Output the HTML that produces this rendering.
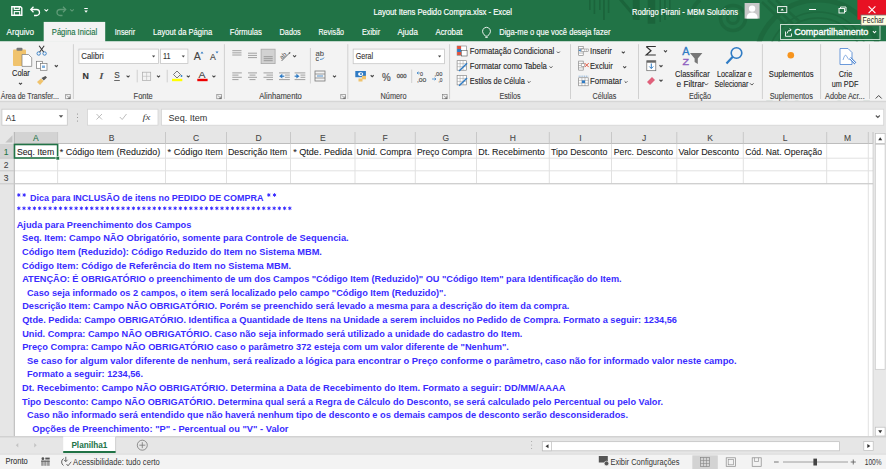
<!DOCTYPE html>
<html><head><meta charset="utf-8"><style>
html,body{margin:0;padding:0;background:#fff;overflow:hidden;}
svg{display:block;font-family:"Liberation Sans",sans-serif;}
</style></head><body>
<svg width="886" height="469" viewBox="0 0 886 469">
<rect x="0" y="0" width="886" height="41.5" fill="#217346" />
<g fill="#1a6139" opacity="0.8"><rect x="589" y="0" width="1.6" height="10"/><rect x="593.6" y="0" width="1.6" height="14"/><rect x="599" y="0" width="1.6" height="10"/><rect x="603" y="0" width="1.8" height="20"/><rect x="607.8" y="0" width="1.6" height="13"/><path d="M619 0 L623 0 L640 20 L636 20 Z"/><rect x="632.8" y="0" width="6.8" height="19.6"/><rect x="647.7" y="0" width="7.5" height="23.7"/><rect x="659.5" y="0" width="1.5" height="22"/><rect x="664.2" y="0" width="1.5" height="20"/><rect x="669" y="0" width="1.5" height="17"/></g>
<g fill="none" stroke="#1a6139" opacity="0.55"><circle cx="733" cy="18" r="12.5" stroke-width="3.5"/><circle cx="733" cy="18" r="5.5" stroke-width="3"/><circle cx="818" cy="62" r="62" stroke-width="5"/><circle cx="818" cy="62" r="50" stroke-width="1.5"/><circle cx="818" cy="62" r="44" stroke-width="1.5"/><path d="M700 0 A 20 20 0 0 0 692 18" stroke-width="4"/><path d="M762 2 L785 24 M768 0 L793 24 M776 0 L800 22" stroke-width="2.5"/></g>
<path d="M11.8 6.8 H20.5 L21.8 8.1 V15.3 H11.8 Z" fill="none" stroke="#fff" stroke-width="1.4" />
<rect x="14.3" y="6.8" width="5" height="2.6" fill="none" stroke="#fff" stroke-width="1.1" />
<rect x="14.3" y="11.6" width="5.4" height="3.7" fill="none" stroke="#fff" stroke-width="1.1" />
<path d="M31.5 9.5 H36.5 A3 3 0 0 1 36.5 15.5 H34" fill="none" stroke="#fff" stroke-width="1.3" />
<path d="M33.5 6.8 L30.8 9.5 L33.5 12.2" fill="none" stroke="#fff" stroke-width="1.3" />
<path d="M44.5 9.299999999999999 L46.3 11.1 L48.099999999999994 9.299999999999999" fill="none" stroke="#fff" stroke-width="1.08" />
<path d="M65 9.5 H60 A3 3 0 0 0 60 15.5 H62.5" fill="none" stroke="#5f9b77" stroke-width="1.3" />
<path d="M63 6.8 L65.7 9.5 L63 12.2" fill="none" stroke="#5f9b77" stroke-width="1.3" />
<path d="M70.2 9.299999999999999 L72 11.1 L73.8 9.299999999999999" fill="none" stroke="#5f9b77" stroke-width="1.08" />
<line x1="84.3" y1="8.5" x2="87.8" y2="8.5" stroke="#fff" stroke-width="1" />
<path d="M84.3 10.5 L87.8 10.5 L86.05 12.8 Z" fill="#fff" />
<g stroke="#fff" stroke-width="0.18">
<text x="373.4" y="14.7" font-size="9" fill="#fff" textLength="138.6" lengthAdjust="spacingAndGlyphs">Layout Itens Pedido Compra.xlsx  -  Excel</text>
<text x="632" y="14.7" font-size="9" fill="#fff" textLength="106" lengthAdjust="spacingAndGlyphs">Rodrigo Pirani - MBM Solutions</text>
</g>
<rect x="744.6" y="3" width="15" height="15.6" fill="#c9c9c9" />
<circle cx="752.1" cy="8.6" r="3.2" fill="#fff"/>
<path d="M746.5 18.6 Q746.5 12.5 752.1 12.5 Q757.7 12.5 757.7 18.6 Z" fill="#fff" />
<rect x="777.6" y="6.6" width="9.2" height="6" fill="none" stroke="#fff" stroke-width="0.9" />
<path d="M780.5 10.5 L782.2 8.5 L783.9 10.5 Z" fill="#fff" />
<line x1="809" y1="9.5" x2="816" y2="9.5" stroke="#fff" stroke-width="1" />
<rect x="839" y="8.5" width="5.5" height="4.5" fill="none" stroke="#fff" stroke-width="0.9" />
<path d="M840.5 8.5 V7 H846 V11.5 H844.5" fill="none" stroke="#fff" stroke-width="0.9" />
<rect x="857.4" y="0" width="28.6" height="19.7" fill="#e81123" />
<path d="M868.6 6.4 L875.4 13.2 M875.4 6.4 L868.6 13.2" fill="none" stroke="#fff" stroke-width="1.1" />
<g stroke="#fff" stroke-width="0.15">
<text x="6.5" y="35" font-size="9" fill="#fff" textLength="27.6" lengthAdjust="spacingAndGlyphs">Arquivo</text>
</g>
<rect x="43.7" y="21.9" width="61.5" height="20" fill="#f3f3f3" />
<g stroke="#217346" stroke-width="0.15">
<text x="51.8" y="35" font-size="9" fill="#217346" textLength="45.3" lengthAdjust="spacingAndGlyphs">Página Inicial</text>
</g>
<g stroke="#fff" stroke-width="0.15">
<text x="114.8" y="35" font-size="9" fill="#fff" textLength="20.3" lengthAdjust="spacingAndGlyphs">Inserir</text>
</g>
<g stroke="#fff" stroke-width="0.15">
<text x="153.1" y="35" font-size="9" fill="#fff" textLength="59.1" lengthAdjust="spacingAndGlyphs">Layout da Página</text>
</g>
<g stroke="#fff" stroke-width="0.15">
<text x="229.8" y="35" font-size="9" fill="#fff" textLength="32.1" lengthAdjust="spacingAndGlyphs">Fórmulas</text>
</g>
<g stroke="#fff" stroke-width="0.15">
<text x="279.5" y="35" font-size="9" fill="#fff" textLength="21.2" lengthAdjust="spacingAndGlyphs">Dados</text>
</g>
<g stroke="#fff" stroke-width="0.15">
<text x="318.5" y="35" font-size="9" fill="#fff" textLength="25.5" lengthAdjust="spacingAndGlyphs">Revisão</text>
</g>
<g stroke="#fff" stroke-width="0.15">
<text x="362" y="35" font-size="9" fill="#fff" textLength="18.1" lengthAdjust="spacingAndGlyphs">Exibir</text>
</g>
<g stroke="#fff" stroke-width="0.15">
<text x="397.5" y="35" font-size="9" fill="#fff" textLength="20.3" lengthAdjust="spacingAndGlyphs">Ajuda</text>
</g>
<g stroke="#fff" stroke-width="0.15">
<text x="435.4" y="35" font-size="9" fill="#fff" textLength="27.1" lengthAdjust="spacingAndGlyphs">Acrobat</text>
</g>
<path d="M486.5 27.3 A4 4 0 0 1 489.9 33.3 L487.6 36.2 H485.4 L483.1 33.3 A4 4 0 0 1 486.5 27.3 Z" fill="none" stroke="#fff" stroke-width="0.9" />
<line x1="485.3" y1="37.5" x2="487.7" y2="37.5" stroke="#fff" stroke-width="0.8" />
<g stroke="#fff" stroke-width="0.15">
<text x="499.2" y="35" font-size="9" fill="#fff" textLength="111.3" lengthAdjust="spacingAndGlyphs">Diga-me o que você deseja fazer</text>
</g>
<rect x="780.5" y="24.5" width="99.5" height="15" fill="none" stroke="#c5dccd" stroke-width="1" />
<path d="M785.5 31.5 V36.3 H791.5 V33.5" fill="none" stroke="#fff" stroke-width="0.9" />
<path d="M787 33.5 Q787.5 30 791 29.8 M789.6 28.6 L791.2 29.8 L789.8 31.3" fill="none" stroke="#fff" stroke-width="0.9" />
<g stroke="#fff" stroke-width="0.35">
<text x="794.2" y="35.3" font-size="9.4" fill="#fff" textLength="74.2" lengthAdjust="spacingAndGlyphs">Compartilhamento</text>
</g>
<path d="M872.9 31.2 L874.5 32.8 L876.1 31.2" fill="none" stroke="#fff" stroke-width="1.08" />
<rect x="861" y="15" width="26" height="10.3" fill="#ffffe1" stroke="#767676" stroke-width="0.8" />
<text x="862.6" y="23.4" font-size="9.2" fill="#222" textLength="21.6" lengthAdjust="spacingAndGlyphs">Fechar</text>
<rect x="0" y="41.5" width="886" height="59.3" fill="#f3f3f3" />
<rect x="0" y="100.8" width="886" height="31.5" fill="#e6e6e6" />
<rect x="0" y="100.8" width="886" height="1.4" fill="#d6d6d6" />
<line x1="73.4" y1="44.2" x2="73.4" y2="99" stroke="#d0d0d0" stroke-width="1" />
<line x1="224.4" y1="44.2" x2="224.4" y2="99" stroke="#d0d0d0" stroke-width="1" />
<line x1="347.8" y1="44.2" x2="347.8" y2="99" stroke="#d0d0d0" stroke-width="1" />
<line x1="449.6" y1="44.2" x2="449.6" y2="99" stroke="#d0d0d0" stroke-width="1" />
<line x1="570.5" y1="44.2" x2="570.5" y2="99" stroke="#d0d0d0" stroke-width="1" />
<line x1="638.5" y1="44.2" x2="638.5" y2="99" stroke="#d0d0d0" stroke-width="1" />
<line x1="762.4" y1="44.2" x2="762.4" y2="99" stroke="#d0d0d0" stroke-width="1" />
<line x1="820.6" y1="44.2" x2="820.6" y2="99" stroke="#d0d0d0" stroke-width="1" />
<line x1="869.5" y1="44.2" x2="869.5" y2="99" stroke="#d0d0d0" stroke-width="1" />
<text x="0.7" y="99" font-size="8.5" fill="#444" stroke="#444" stroke-width="0.12" textLength="58.3" lengthAdjust="spacingAndGlyphs">Área de Transfer...</text>
<rect x="65.7" y="94.3" width="4.5" height="4.5" fill="none" stroke="#777" stroke-width="0.6" />
<path d="M66.9 95.5 L69.9 98.5 M69.9 96.3 V98.5 H67.7" fill="none" stroke="#555" stroke-width="0.6" />
<text x="133.6" y="99.3" font-size="8.5" fill="#444" stroke="#444" stroke-width="0.12" textLength="19.1" lengthAdjust="spacingAndGlyphs">Fonte</text>
<rect x="216.8" y="94.3" width="4.5" height="4.5" fill="none" stroke="#777" stroke-width="0.6" />
<path d="M218.0 95.5 L221.0 98.5 M221.0 96.3 V98.5 H218.8" fill="none" stroke="#555" stroke-width="0.6" />
<text x="259.2" y="99.4" font-size="8.5" fill="#444" stroke="#444" stroke-width="0.12" textLength="42.6" lengthAdjust="spacingAndGlyphs">Alinhamento</text>
<rect x="340.8" y="94.3" width="4.5" height="4.5" fill="none" stroke="#777" stroke-width="0.6" />
<path d="M342.0 95.5 L345.0 98.5 M345.0 96.3 V98.5 H342.8" fill="none" stroke="#555" stroke-width="0.6" />
<text x="380.5" y="99.4" font-size="8.5" fill="#444" stroke="#444" stroke-width="0.12" textLength="26.1" lengthAdjust="spacingAndGlyphs">Número</text>
<rect x="442.6" y="94.3" width="4.5" height="4.5" fill="none" stroke="#777" stroke-width="0.6" />
<path d="M443.8 95.5 L446.8 98.5 M446.8 96.3 V98.5 H444.6" fill="none" stroke="#555" stroke-width="0.6" />
<text x="499.5" y="99.1" font-size="8.5" fill="#444" stroke="#444" stroke-width="0.12" textLength="21.1" lengthAdjust="spacingAndGlyphs">Estilos</text>
<text x="592.6" y="99.1" font-size="8.5" fill="#444" stroke="#444" stroke-width="0.12" textLength="23.8" lengthAdjust="spacingAndGlyphs">Células</text>
<text x="689" y="99.1" font-size="8.5" fill="#444" stroke="#444" stroke-width="0.12" textLength="22" lengthAdjust="spacingAndGlyphs">Edição</text>
<text x="769.7" y="99.1" font-size="8.5" fill="#444" stroke="#444" stroke-width="0.12" textLength="43.2" lengthAdjust="spacingAndGlyphs">Suplementos</text>
<text x="825" y="99.1" font-size="8.5" fill="#444" stroke="#444" stroke-width="0.12" textLength="39.7" lengthAdjust="spacingAndGlyphs">Adobe Acr...</text>
<path d="M875.7 98.5 L878.7 95.5 L881.7 98.5" fill="none" stroke="#444" stroke-width="1" />
<rect x="13" y="49.5" width="13" height="16.5" fill="#f0c36d" rx="1"/>
<rect x="16.5" y="47.7" width="6" height="3" fill="#777" rx="1"/>
<path d="M22 54.5 H28.5 L31.7 57.7 V66.4 H22 Z" fill="#fff" stroke="#777" stroke-width="0.7" />
<text x="12" y="76.3" font-size="8.8" fill="#262626" stroke="#262626" stroke-width="0.12" textLength="17.8" lengthAdjust="spacingAndGlyphs">Colar</text>
<path d="M19.0 82.85 L20.5 84.35 L22.0 82.85" fill="none" stroke="#444" stroke-width="1.08" />
<circle cx="38.7" cy="53.5" r="1.7" fill="none" stroke="#2f7bc4" stroke-width="0.9"/>
<circle cx="44.6" cy="53.5" r="1.7" fill="none" stroke="#2f7bc4" stroke-width="0.9"/>
<path d="M39.7 52 L44.2 45.8 M43.6 52 L39.1 45.8" fill="none" stroke="#333" stroke-width="1.05" />
<rect x="36.5" y="61.3" width="6" height="7" fill="#fff" stroke="#777" stroke-width="0.7" />
<rect x="40.5" y="63.5" width="6.5" height="6.8" fill="#fff" stroke="#777" stroke-width="0.7" />
<rect x="42" y="65.5" width="3" height="2.5" fill="#7fb0de" />
<path d="M54.8 65.25 L56.3 66.75 L57.8 65.25" fill="none" stroke="#444" stroke-width="1.08" />
<path d="M37 82 L41 78.5 L43.5 81 L40 85 Z" fill="#f0c36d" />
<path d="M41.5 78 L45.5 75.9 L47 77.5 L43.8 80.5 Z" fill="#555" />
<rect x="78.9" y="49.1" width="79.6" height="14.4" fill="#fff" stroke="#c6c6c6" stroke-width="0.8" />
<text x="81.2" y="59.2" font-size="9" fill="#333" stroke="#333" stroke-width="0.12" textLength="22.5" lengthAdjust="spacingAndGlyphs">Calibri</text>
<path d="M152 55.5 L155.2 55.5 L153.6 57.5 Z" fill="#444" />
<rect x="160.4" y="49.1" width="27.5" height="14.4" fill="#fff" stroke="#c6c6c6" stroke-width="0.8" />
<text x="163" y="59.2" font-size="9" fill="#333" stroke="#333" stroke-width="0.12" textLength="7.5" lengthAdjust="spacingAndGlyphs">11</text>
<path d="M181.7 55.5 L184.9 55.5 L183.3 57.5 Z" fill="#444" />
<text x="193.7" y="60" font-size="10.5" fill="#444" stroke="#444" stroke-width="0.12" textLength="7" lengthAdjust="spacingAndGlyphs">A</text>
<path d="M200.5 53.5 L202 51.5 L203.5 53.5 Z" fill="#2f7bc4" />
<text x="210" y="60" font-size="8.5" fill="#444" stroke="#444" stroke-width="0.12" textLength="5.8" lengthAdjust="spacingAndGlyphs">A</text>
<path d="M215.5 51.5 L217 53.5 L218.5 51.5 Z" fill="#2f7bc4" />
<text x="82.6" y="79" font-size="8.5" fill="#333" stroke="#333" stroke-width="0.12" font-weight="bold" textLength="6.4" lengthAdjust="spacingAndGlyphs">N</text>
<text x="99" y="79" font-size="8.5" fill="#444" stroke="#444" stroke-width="0.12" textLength="4.5" lengthAdjust="spacingAndGlyphs" font-style="italic" font-family="Liberation Serif">I</text>
<text x="114.2" y="78.2" font-size="8.5" fill="#444" stroke="#444" stroke-width="0.12" textLength="5.5" lengthAdjust="spacingAndGlyphs">S</text>
<line x1="114.2" y1="80.5" x2="119.8" y2="80.5" stroke="#444" stroke-width="0.8" />
<path d="M126.6 75.55 L128.1 77.05 L129.6 75.55" fill="none" stroke="#444" stroke-width="1.08" />
<line x1="137.2" y1="69.8" x2="137.2" y2="82.4" stroke="#d0d0d0" stroke-width="1" />
<rect x="142.5" y="72.2" width="8.2" height="8.2" fill="none" stroke="#aaa" stroke-width="0.7" />
<line x1="146.6" y1="72.2" x2="146.6" y2="80.4" stroke="#bbb" stroke-width="0.6" />
<line x1="142.5" y1="76.3" x2="150.7" y2="76.3" stroke="#bbb" stroke-width="0.6" />
<path d="M157.0 75.55 L158.5 77.05 L160.0 75.55" fill="none" stroke="#444" stroke-width="1.08" />
<line x1="167.2" y1="69.8" x2="167.2" y2="82.4" stroke="#d0d0d0" stroke-width="1" />
<path d="M173.5 74.5 L177 71 L180.5 74.5 L177 78 Z" fill="none" stroke="#444" stroke-width="0.7" />
<circle cx="181.5" cy="76" r="0.9" fill="#2f7bc4"/>
<rect x="172" y="78.8" width="10.3" height="2.4" fill="#ffff00" />
<path d="M186.8 75.55 L188.3 77.05 L189.8 75.55" fill="none" stroke="#444" stroke-width="1.08" />
<text x="198.5" y="77.6" font-size="8.5" fill="#444" stroke="#444" stroke-width="0.12" textLength="7" lengthAdjust="spacingAndGlyphs">A</text>
<rect x="197.3" y="78.8" width="10.3" height="2.4" fill="#e00" />
<path d="M212.4 75.55 L213.9 77.05 L215.4 75.55" fill="none" stroke="#444" stroke-width="1.08" />
<line x1="232.3" y1="50.7" x2="241.5" y2="50.7" stroke="#8a8a8a" stroke-width="0.8" />
<line x1="232.3" y1="52.85" x2="241.5" y2="52.85" stroke="#8a8a8a" stroke-width="0.8" />
<line x1="232.3" y1="55.0" x2="241.5" y2="55.0" stroke="#8a8a8a" stroke-width="0.8" />
<line x1="248" y1="53.2" x2="257" y2="53.2" stroke="#8a8a8a" stroke-width="0.8" />
<line x1="248" y1="55.400000000000006" x2="257" y2="55.400000000000006" stroke="#8a8a8a" stroke-width="0.8" />
<line x1="248" y1="57.6" x2="257" y2="57.6" stroke="#8a8a8a" stroke-width="0.8" />
<rect x="261.1" y="49.2" width="14" height="14.4" fill="#d2d2d2" stroke="#a8a8a8" stroke-width="0.8" />
<line x1="263.7" y1="56.7" x2="272.7" y2="56.7" stroke="#8a8a8a" stroke-width="0.8" />
<line x1="263.7" y1="58.7" x2="272.7" y2="58.7" stroke="#8a8a8a" stroke-width="0.8" />
<line x1="263.7" y1="60.7" x2="272.7" y2="60.7" stroke="#8a8a8a" stroke-width="0.8" />
<g transform="translate(283.5 55.5) rotate(-45)"><text x="-4" y="2" font-size="6.3" fill="#555">ab</text></g>
<path d="M281.5 61 L290 52.5" fill="none" stroke="#555" stroke-width="0.8" />
<circle cx="289.5" cy="53" r="0.8" fill="#555"/>
<path d="M293.1 55.35 L294.6 56.85 L296.1 55.35" fill="none" stroke="#444" stroke-width="1.08" />
<line x1="232.3" y1="72.9" x2="241.8" y2="72.9" stroke="#8a8a8a" stroke-width="0.8" />
<line x1="248" y1="72.9" x2="257" y2="72.9" stroke="#8a8a8a" stroke-width="0.8" />
<line x1="263.5" y1="72.9" x2="273" y2="72.9" stroke="#8a8a8a" stroke-width="0.8" />
<line x1="232.3" y1="75.1" x2="238.5" y2="75.1" stroke="#8a8a8a" stroke-width="0.8" />
<line x1="249.5" y1="75.1" x2="255.5" y2="75.1" stroke="#8a8a8a" stroke-width="0.8" />
<line x1="266.5" y1="75.1" x2="273" y2="75.1" stroke="#8a8a8a" stroke-width="0.8" />
<line x1="232.3" y1="77.3" x2="241.8" y2="77.3" stroke="#8a8a8a" stroke-width="0.8" />
<line x1="248" y1="77.3" x2="257" y2="77.3" stroke="#8a8a8a" stroke-width="0.8" />
<line x1="263.5" y1="77.3" x2="273" y2="77.3" stroke="#8a8a8a" stroke-width="0.8" />
<line x1="232.3" y1="79.6" x2="238.5" y2="79.6" stroke="#8a8a8a" stroke-width="0.8" />
<line x1="249.5" y1="79.6" x2="255.5" y2="79.6" stroke="#8a8a8a" stroke-width="0.8" />
<line x1="266.5" y1="79.6" x2="273" y2="79.6" stroke="#8a8a8a" stroke-width="0.8" />
<line x1="279" y1="72.9" x2="289.8" y2="72.9" stroke="#8a8a8a" stroke-width="0.8" />
<line x1="285" y1="75.1" x2="289.8" y2="75.1" stroke="#8a8a8a" stroke-width="0.8" />
<line x1="285" y1="77.3" x2="289.8" y2="77.3" stroke="#8a8a8a" stroke-width="0.8" />
<line x1="279" y1="79.6" x2="289.8" y2="79.6" stroke="#8a8a8a" stroke-width="0.8" />
<path d="M279.2 76.2 L282.3 73.8 V78.6 Z" fill="#2f7bc4" />
<line x1="281.5" y1="76.2" x2="284.3" y2="76.2" stroke="#2f7bc4" stroke-width="1.2" />
<line x1="294.6" y1="72.9" x2="305.3" y2="72.9" stroke="#8a8a8a" stroke-width="0.8" />
<line x1="300.5" y1="75.1" x2="305.3" y2="75.1" stroke="#8a8a8a" stroke-width="0.8" />
<line x1="300.5" y1="77.3" x2="305.3" y2="77.3" stroke="#8a8a8a" stroke-width="0.8" />
<line x1="294.6" y1="79.6" x2="305.3" y2="79.6" stroke="#8a8a8a" stroke-width="0.8" />
<path d="M299.5 76.2 L296.4 73.8 V78.6 Z" fill="#2f7bc4" />
<line x1="294.6" y1="76.2" x2="297.2" y2="76.2" stroke="#2f7bc4" stroke-width="1.2" />
<line x1="310.4" y1="48" x2="310.4" y2="83.5" stroke="#d0d0d0" stroke-width="1" />
<text x="315.6" y="55.5" font-size="6.3" fill="#555" stroke="#555" stroke-width="0.12" textLength="8.5" lengthAdjust="spacingAndGlyphs">ab</text>
<text x="315.6" y="60.5" font-size="6.3" fill="#555" stroke="#555" stroke-width="0.12" textLength="3.5" lengthAdjust="spacingAndGlyphs">c</text>
<path d="M320 59.5 Q323.5 59.5 324 57.5" fill="none" stroke="#2f7bc4" stroke-width="0.8" />
<rect x="315" y="71" width="10" height="10" fill="none" stroke="#777" stroke-width="0.8" />
<line x1="315" y1="74" x2="325" y2="74" stroke="#777" stroke-width="0.7" />
<line x1="315" y1="78" x2="325" y2="78" stroke="#777" stroke-width="0.7" />
<line x1="317" y1="76" x2="323" y2="76" stroke="#2f7bc4" stroke-width="0.8" />
<path d="M333.0 75.55 L334.5 77.05 L336.0 75.55" fill="none" stroke="#444" stroke-width="1.08" />
<rect x="353.2" y="49.1" width="91.3" height="14.6" fill="#fff" stroke="#c6c6c6" stroke-width="0.8" />
<text x="355.7" y="59.4" font-size="9" fill="#333" stroke="#333" stroke-width="0.12" textLength="17.5" lengthAdjust="spacingAndGlyphs">Geral</text>
<path d="M438 55.6 L441.2 55.6 L439.6 57.6 Z" fill="#444" />
<rect x="355.3" y="71" width="10.6" height="6.2" fill="#2f7bc4" />
<ellipse cx="360.6" cy="74.1" rx="2.6" ry="1.9" fill="#fff"/>
<circle cx="361" cy="74.1" r="1" fill="#2f7bc4"/>
<rect x="358.5" y="78.5" width="4" height="3" fill="#f0c36d" />
<rect x="362" y="75.8" width="4" height="3.5" fill="#f0c36d" />
<path d="M370.7 75.25 L372.2 76.75 L373.7 75.25" fill="none" stroke="#444" stroke-width="1.08" />
<text x="382.1" y="80.6" font-size="10" fill="#555" stroke="#555" stroke-width="0.2" textLength="8.7" lengthAdjust="spacingAndGlyphs">%</text>
<text x="396.8" y="78.3" font-size="5.8" fill="#555" stroke="#555" stroke-width="0.3" textLength="9.8" lengthAdjust="spacingAndGlyphs">000</text>
<line x1="411.7" y1="69.5" x2="411.7" y2="83" stroke="#d0d0d0" stroke-width="1" />
<text x="420" y="75.5" font-size="5.5" fill="#444" stroke="#444" stroke-width="0.12" textLength="3" lengthAdjust="spacingAndGlyphs">0</text>
<text x="416.9" y="81.8" font-size="5.5" fill="#444" stroke="#444" stroke-width="0.12" textLength="9.5" lengthAdjust="spacingAndGlyphs">,00</text>
<path d="M417 73 L420 73 M417 73 L418.5 71.8 M417 73 L418.5 74.2" fill="none" stroke="#2f7bc4" stroke-width="0.7" />
<text x="434.5" y="75.5" font-size="5.5" fill="#444" stroke="#444" stroke-width="0.12" textLength="8" lengthAdjust="spacingAndGlyphs">,00</text>
<text x="438.5" y="81.8" font-size="5.5" fill="#444" stroke="#444" stroke-width="0.12" textLength="4" lengthAdjust="spacingAndGlyphs">,0</text>
<path d="M432 79 L436 79 L434.5 77.8 M436 79 L434.5 80.2" fill="none" stroke="#2f7bc4" stroke-width="0.7" />
<rect x="457.1" y="46.0" width="9.5" height="9.5" fill="#fff" stroke="#777" stroke-width="0.6" />
<rect x="457.1" y="46.0" width="4" height="3" fill="#e0533d" />
<rect x="457.1" y="49.0" width="4" height="3" fill="#2f7bc4" />
<rect x="457.1" y="52.0" width="4" height="3" fill="#e0533d" />
<rect x="461.6" y="50.5" width="5.5" height="5.5" fill="#fff" stroke="#555" stroke-width="0.6" />
<rect x="457.1" y="60.7" width="9.5" height="9.5" fill="#fff" stroke="#777" stroke-width="0.6" />
<line x1="457.1" y1="63.7" x2="466.6" y2="63.7" stroke="#999" stroke-width="0.5" />
<line x1="457.1" y1="66.7" x2="466.6" y2="66.7" stroke="#999" stroke-width="0.5" />
<line x1="460.1" y1="60.7" x2="460.1" y2="70.2" stroke="#999" stroke-width="0.5" />
<line x1="463.1" y1="60.7" x2="463.1" y2="70.2" stroke="#999" stroke-width="0.5" />
<path d="M459.1 71.0 L467.1 63.2" fill="none" stroke="#2f7bc4" stroke-width="1.4" />
<rect x="457.1" y="75.4" width="9.5" height="9.5" fill="#fff" stroke="#777" stroke-width="0.6" />
<line x1="457.1" y1="78.4" x2="466.6" y2="78.4" stroke="#999" stroke-width="0.5" />
<line x1="457.1" y1="81.4" x2="466.6" y2="81.4" stroke="#999" stroke-width="0.5" />
<line x1="460.1" y1="75.4" x2="460.1" y2="84.9" stroke="#999" stroke-width="0.5" />
<line x1="463.1" y1="75.4" x2="463.1" y2="84.9" stroke="#999" stroke-width="0.5" />
<path d="M459.1 85.7 L467.1 77.9" fill="none" stroke="#2f7bc4" stroke-width="1.4" />
<text x="469.8" y="54.4" font-size="8.8" fill="#262626" stroke="#262626" stroke-width="0.12" textLength="84.4" lengthAdjust="spacingAndGlyphs">Formatação Condicional</text>
<path d="M557.0 51.599999999999994 L558.4 53.0 L559.8 51.599999999999994" fill="none" stroke="#444" stroke-width="0.96" />
<text x="469.8" y="69.2" font-size="8.8" fill="#262626" stroke="#262626" stroke-width="0.12" textLength="77.1" lengthAdjust="spacingAndGlyphs">Formatar como Tabela</text>
<path d="M549.6 66.39999999999999 L551 67.8 L552.4 66.39999999999999" fill="none" stroke="#444" stroke-width="0.96" />
<text x="469.8" y="84.1" font-size="8.8" fill="#262626" stroke="#262626" stroke-width="0.12" textLength="55.0" lengthAdjust="spacingAndGlyphs">Estilos de Célula</text>
<path d="M527.6 81.3 L529 82.7 L530.4 81.3" fill="none" stroke="#444" stroke-width="0.96" />
<rect x="578.7" y="46.3" width="4.5" height="9" fill="#fff" stroke="#777" stroke-width="0.6" />
<line x1="578.7" y1="48.55" x2="583.2" y2="48.55" stroke="#777" stroke-width="0.5" />
<line x1="578.7" y1="50.8" x2="583.2" y2="50.8" stroke="#777" stroke-width="0.5" />
<line x1="578.7" y1="53.05" x2="583.2" y2="53.05" stroke="#777" stroke-width="0.5" />
<rect x="581.2" y="49.0" width="7.5" height="2.6" fill="#fff" stroke="#777" stroke-width="0.5" />
<line x1="584.7" y1="49.0" x2="584.7" y2="51.599999999999994" stroke="#777" stroke-width="0.4" />
<line x1="586.7" y1="49.0" x2="586.7" y2="51.599999999999994" stroke="#777" stroke-width="0.4" />
<path d="M578.5 50.3 L580.7 48.8 V51.8 Z" fill="#2f7bc4" />
<rect x="578.7" y="61.1" width="4.5" height="9" fill="#fff" stroke="#777" stroke-width="0.6" />
<line x1="578.7" y1="63.35" x2="583.2" y2="63.35" stroke="#777" stroke-width="0.5" />
<line x1="578.7" y1="65.6" x2="583.2" y2="65.6" stroke="#777" stroke-width="0.5" />
<line x1="578.7" y1="67.85" x2="583.2" y2="67.85" stroke="#777" stroke-width="0.5" />
<rect x="581.2" y="63.800000000000004" width="3.5" height="2.6" fill="#fff" stroke="#777" stroke-width="0.5" />
<path d="M584.7 63.1 L588.7 67.1 M588.7 63.1 L584.7 67.1" fill="none" stroke="#e0533d" stroke-width="1" />
<rect x="578.7" y="77.8" width="9.5" height="8" fill="#fff" stroke="#777" stroke-width="0.6" />
<line x1="578.7" y1="80.39999999999999" x2="588.2" y2="80.39999999999999" stroke="#777" stroke-width="0.4" />
<line x1="578.7" y1="83.1" x2="588.2" y2="83.1" stroke="#777" stroke-width="0.4" />
<line x1="581.9000000000001" y1="77.8" x2="581.9000000000001" y2="85.8" stroke="#777" stroke-width="0.4" />
<line x1="585.0" y1="77.8" x2="585.0" y2="85.8" stroke="#777" stroke-width="0.4" />
<rect x="581.9000000000001" y="80.39999999999999" width="3.1" height="2.7" fill="#2f7bc4" />
<line x1="578.7" y1="76.19999999999999" x2="588.2" y2="76.19999999999999" stroke="#2f7bc4" stroke-width="0.6" stroke-dasharray="1 0.8"/>
<text x="590.1" y="54.4" font-size="8.8" fill="#262626" stroke="#262626" stroke-width="0.12" textLength="21.7" lengthAdjust="spacingAndGlyphs">Inserir</text>
<path d="M621.8 51.55 L623.3 53.05 L624.8 51.55" fill="none" stroke="#444" stroke-width="1.08" />
<text x="590.1" y="69.2" font-size="8.8" fill="#262626" stroke="#262626" stroke-width="0.12" textLength="22.6" lengthAdjust="spacingAndGlyphs">Excluir</text>
<path d="M623.2 66.35 L624.7 67.85 L626.2 66.35" fill="none" stroke="#444" stroke-width="1.08" />
<text x="590.1" y="84.1" font-size="8.8" fill="#262626" stroke="#262626" stroke-width="0.12" textLength="31.7" lengthAdjust="spacingAndGlyphs">Formatar</text>
<path d="M624.6 81.3 L626 82.7 L627.4 81.3" fill="none" stroke="#444" stroke-width="0.96" />
<path d="M646.2 46.5 H655.8 M646.2 46.5 L651 50.7 L646.2 55 H655.8" fill="none" stroke="#333" stroke-width="1.2" />
<path d="M664.0 50.45 L665.5 51.95 L667.0 50.45" fill="none" stroke="#444" stroke-width="1.08" />
<rect x="646.8" y="60.7" width="9" height="10" fill="#fff" stroke="#666" stroke-width="0.7" />
<rect x="646.8" y="60.7" width="9" height="2" fill="#666" />
<path d="M651.3 63.5 V68.5 M649.3 66.5 L651.3 68.5 L653.3 66.5" fill="none" stroke="#2f7bc4" stroke-width="1" />
<path d="M659.5 65.25 L661 66.75 L662.5 65.25" fill="none" stroke="#444" stroke-width="1.08" />
<path d="M647 82 L652 77 L655 80 L650 85 Z" fill="#e0607a" />
<path d="M659.5 79.75 L661 81.25 L662.5 79.75" fill="none" stroke="#444" stroke-width="1.08" />
<text x="682.2" y="55" font-size="10" fill="#2f7bc4" stroke="#2f7bc4" stroke-width="0.3" textLength="7.2" lengthAdjust="spacingAndGlyphs">A</text>
<text x="682.6" y="65" font-size="9.5" fill="#8e5dbf" stroke="#8e5dbf" stroke-width="0.3" textLength="6.6" lengthAdjust="spacingAndGlyphs">Z</text>
<path d="M690 53 H702.4 L697.8 58.5 V64 L694.6 62 V58.5 Z" fill="#777" />
<text x="675.1" y="76.5" font-size="8.8" fill="#262626" stroke="#262626" stroke-width="0.12" textLength="34.6" lengthAdjust="spacingAndGlyphs">Classificar</text>
<text x="676.5" y="86.6" font-size="8.8" fill="#262626" stroke="#262626" stroke-width="0.12" textLength="28.0" lengthAdjust="spacingAndGlyphs">e Filtrar</text>
<path d="M704.5999999999999 83.35000000000001 L706.3 85.05 L708.0 83.35000000000001" fill="none" stroke="#444" stroke-width="0.96" />
<circle cx="736.5" cy="53" r="5.3" fill="none" stroke="#2f7bc4" stroke-width="1.6"/>
<line x1="732.8" y1="56.8" x2="726.5" y2="63.5" stroke="#2f7bc4" stroke-width="2.2" />
<text x="717" y="76.5" font-size="8.8" fill="#262626" stroke="#262626" stroke-width="0.12" textLength="35" lengthAdjust="spacingAndGlyphs">Localizar e</text>
<text x="714.5" y="86.6" font-size="8.8" fill="#262626" stroke="#262626" stroke-width="0.12" textLength="34.0" lengthAdjust="spacingAndGlyphs">Selecionar</text>
<path d="M750.0999999999999 83.35000000000001 L751.8 85.05 L753.5 83.35000000000001" fill="none" stroke="#444" stroke-width="0.96" />
<circle cx="790.8" cy="55.3" r="3.3" fill="#f7941d"/>
<text x="768.8" y="76.5" font-size="8.8" fill="#262626" stroke="#262626" stroke-width="0.12" textLength="44.7" lengthAdjust="spacingAndGlyphs">Suplementos</text>
<path d="M840 48.5 H848 L852 52.5 V64.5 H840 Z" fill="#fff" stroke="#5b8fd6" stroke-width="0.9" />
<path d="M843 60 Q845 53 846.5 56 Q848 59 849.5 60" fill="none" stroke="#5b8fd6" stroke-width="0.7" />
<path d="M850 58 L855.5 63.5" fill="none" stroke="#5b8fd6" stroke-width="2.5" />
<path d="M850 58 L855.5 63.5" fill="none" stroke="#fff" stroke-width="1" />
<text x="838.8" y="76.5" font-size="8.8" fill="#262626" stroke="#262626" stroke-width="0.12" textLength="13.4" lengthAdjust="spacingAndGlyphs">Crie</text>
<text x="831.7" y="86.6" font-size="8.8" fill="#262626" stroke="#262626" stroke-width="0.12" textLength="26.7" lengthAdjust="spacingAndGlyphs">um PDF</text>
<rect x="1.9" y="109.2" width="65.4" height="16" fill="#fff" stroke="#c6c6c6" stroke-width="0.8" />
<text x="5.7" y="120.8" font-size="9" fill="#333" textLength="10.3" lengthAdjust="spacingAndGlyphs">A1</text>
<path d="M58.8 115.2 L63.2 115.2 L61 117.7 Z" fill="#555" />
<circle cx="77.5" cy="114" r="0.55" fill="#888"/>
<circle cx="77.5" cy="117.5" r="0.55" fill="#888"/>
<circle cx="77.5" cy="121" r="0.55" fill="#888"/>
<rect x="87.5" y="109.2" width="70.5" height="16" fill="#fff" stroke="#d4d4d4" stroke-width="0.8" />
<path d="M96.5 114 L102 119.5 M102 114 L96.5 119.5" fill="none" stroke="#b5b5b5" stroke-width="0.9" />
<path d="M119.8 117 L122.2 119.5 L126.5 114" fill="none" stroke="#b5b5b5" stroke-width="0.9" />
<text x="142.5" y="120" font-size="8.5" fill="#444" textLength="8" lengthAdjust="spacingAndGlyphs" font-style="italic" font-family="Liberation Serif">fx</text>
<rect x="161.5" y="109.2" width="722.2" height="16" fill="#fff" stroke="#d4d4d4" stroke-width="0.8" />
<text x="168.6" y="121" font-size="9.8" fill="#333" textLength="38.7" lengthAdjust="spacingAndGlyphs">Seq. Item</text>
<path d="M875.8 115.5 L877.8 117.5 L879.8 115.5" fill="none" stroke="#555" stroke-width="1.08" />
<rect x="14" y="132" width="859.2" height="12" fill="#e6e6e6" />
<rect x="14" y="132" width="43.6" height="12" fill="#d3d3d3" />
<line x1="14" y1="143.5" x2="873.2" y2="143.5" stroke="#bdbdbd" stroke-width="1" />
<line x1="57.6" y1="132" x2="57.6" y2="143.5" stroke="#c8c8c8" stroke-width="1" />
<line x1="165.5" y1="132" x2="165.5" y2="143.5" stroke="#c8c8c8" stroke-width="1" />
<line x1="226.5" y1="132" x2="226.5" y2="143.5" stroke="#c8c8c8" stroke-width="1" />
<line x1="290.5" y1="132" x2="290.5" y2="143.5" stroke="#c8c8c8" stroke-width="1" />
<line x1="355" y1="132" x2="355" y2="143.5" stroke="#c8c8c8" stroke-width="1" />
<line x1="415.3" y1="132" x2="415.3" y2="143.5" stroke="#c8c8c8" stroke-width="1" />
<line x1="476.5" y1="132" x2="476.5" y2="143.5" stroke="#c8c8c8" stroke-width="1" />
<line x1="549.3" y1="132" x2="549.3" y2="143.5" stroke="#c8c8c8" stroke-width="1" />
<line x1="611.5" y1="132" x2="611.5" y2="143.5" stroke="#c8c8c8" stroke-width="1" />
<line x1="676.8" y1="132" x2="676.8" y2="143.5" stroke="#c8c8c8" stroke-width="1" />
<line x1="743.3" y1="132" x2="743.3" y2="143.5" stroke="#c8c8c8" stroke-width="1" />
<line x1="826.7" y1="132" x2="826.7" y2="143.5" stroke="#c8c8c8" stroke-width="1" />
<line x1="868.3" y1="132" x2="868.3" y2="143.5" stroke="#c8c8c8" stroke-width="1" />
<line x1="873.2" y1="132" x2="873.2" y2="143.5" stroke="#c8c8c8" stroke-width="1" />
<text x="35.8" y="141" font-size="8.5" fill="#217346" stroke="#217346" stroke-width="0.08" text-anchor="middle">A</text>
<text x="111.55" y="141" font-size="8.5" fill="#444" stroke="#444" stroke-width="0.08" text-anchor="middle">B</text>
<text x="196.0" y="141" font-size="8.5" fill="#444" stroke="#444" stroke-width="0.08" text-anchor="middle">C</text>
<text x="258.5" y="141" font-size="8.5" fill="#444" stroke="#444" stroke-width="0.08" text-anchor="middle">D</text>
<text x="322.75" y="141" font-size="8.5" fill="#444" stroke="#444" stroke-width="0.08" text-anchor="middle">E</text>
<text x="385.15" y="141" font-size="8.5" fill="#444" stroke="#444" stroke-width="0.08" text-anchor="middle">F</text>
<text x="445.9" y="141" font-size="8.5" fill="#444" stroke="#444" stroke-width="0.08" text-anchor="middle">G</text>
<text x="512.9" y="141" font-size="8.5" fill="#444" stroke="#444" stroke-width="0.08" text-anchor="middle">H</text>
<text x="580.4" y="141" font-size="8.5" fill="#444" stroke="#444" stroke-width="0.08" text-anchor="middle">I</text>
<text x="644.15" y="141" font-size="8.5" fill="#444" stroke="#444" stroke-width="0.08" text-anchor="middle">J</text>
<text x="710.05" y="141" font-size="8.5" fill="#444" stroke="#444" stroke-width="0.08" text-anchor="middle">K</text>
<text x="785.0" y="141" font-size="8.5" fill="#444" stroke="#444" stroke-width="0.08" text-anchor="middle">L</text>
<text x="847.5" y="141" font-size="8.5" fill="#444" stroke="#444" stroke-width="0.08" text-anchor="middle">M</text>
<rect x="14" y="144" width="859.2" height="292.3" fill="#fff" />
<line x1="14" y1="158.2" x2="873.2" y2="158.2" stroke="#e1e1e1" stroke-width="1" />
<line x1="14" y1="170.8" x2="873.2" y2="170.8" stroke="#e1e1e1" stroke-width="1" />
<line x1="14" y1="183.6" x2="873.2" y2="183.6" stroke="#e1e1e1" stroke-width="1" />
<line x1="57.6" y1="144" x2="57.6" y2="183.6" stroke="#e1e1e1" stroke-width="1" />
<line x1="165.5" y1="144" x2="165.5" y2="183.6" stroke="#e1e1e1" stroke-width="1" />
<line x1="226.5" y1="144" x2="226.5" y2="183.6" stroke="#e1e1e1" stroke-width="1" />
<line x1="290.5" y1="144" x2="290.5" y2="183.6" stroke="#e1e1e1" stroke-width="1" />
<line x1="355" y1="144" x2="355" y2="183.6" stroke="#e1e1e1" stroke-width="1" />
<line x1="415.3" y1="144" x2="415.3" y2="183.6" stroke="#e1e1e1" stroke-width="1" />
<line x1="476.5" y1="144" x2="476.5" y2="183.6" stroke="#e1e1e1" stroke-width="1" />
<line x1="549.3" y1="144" x2="549.3" y2="183.6" stroke="#e1e1e1" stroke-width="1" />
<line x1="611.5" y1="144" x2="611.5" y2="183.6" stroke="#e1e1e1" stroke-width="1" />
<line x1="676.8" y1="144" x2="676.8" y2="183.6" stroke="#e1e1e1" stroke-width="1" />
<line x1="743.3" y1="144" x2="743.3" y2="183.6" stroke="#e1e1e1" stroke-width="1" />
<line x1="826.7" y1="144" x2="826.7" y2="183.6" stroke="#e1e1e1" stroke-width="1" />
<line x1="868.3" y1="144" x2="868.3" y2="183.6" stroke="#e1e1e1" stroke-width="1" />
<line x1="868.3" y1="183.6" x2="868.3" y2="436.3" stroke="#e1e1e1" stroke-width="1" />
<line x1="873.2" y1="132" x2="873.2" y2="436.3" stroke="#c6c6c6" stroke-width="1" />
<rect x="0" y="132" width="14" height="304.3" fill="#e6e6e6" />
<rect x="0" y="144" width="14" height="14.2" fill="#d3d3d3" />
<line x1="14.3" y1="132" x2="14.3" y2="436.3" stroke="#b4b4b4" stroke-width="1" />
<path d="M12.5 135.3 V142.5 H5.3 Z" fill="#c4c4c4" />
<line x1="0" y1="158.2" x2="14" y2="158.2" stroke="#c8c8c8" stroke-width="1" />
<line x1="0" y1="170.8" x2="14" y2="170.8" stroke="#c8c8c8" stroke-width="1" />
<line x1="0" y1="183.8" x2="873.2" y2="183.8" stroke="#c8c8c8" stroke-width="1" />
<text x="6.2" y="155.2" font-size="8.5" fill="#217346" stroke="#217346" stroke-width="0.08" text-anchor="middle">1</text>
<text x="6.2" y="167.8" font-size="8.5" fill="#444" stroke="#444" stroke-width="0.08" text-anchor="middle">2</text>
<text x="6.2" y="180.8" font-size="8.5" fill="#444" stroke="#444" stroke-width="0.08" text-anchor="middle">3</text>
<text x="16.9" y="155" font-size="9.9" fill="#222" stroke="#222" stroke-width="0.08" textLength="37.3" lengthAdjust="spacingAndGlyphs">Seq. Item</text>
<text x="59.8" y="155" font-size="9.9" fill="#222" stroke="#222" stroke-width="0.08" textLength="100.5" lengthAdjust="spacingAndGlyphs">* Código Item (Reduzido)</text>
<text x="167.6" y="155" font-size="9.9" fill="#222" stroke="#222" stroke-width="0.08" textLength="55.2" lengthAdjust="spacingAndGlyphs">* Código Item</text>
<text x="227.9" y="155" font-size="9.9" fill="#222" stroke="#222" stroke-width="0.08" textLength="59.2" lengthAdjust="spacingAndGlyphs">Descrição Item</text>
<text x="293.2" y="155" font-size="9.9" fill="#222" stroke="#222" stroke-width="0.08" textLength="59.0" lengthAdjust="spacingAndGlyphs">* Qtde. Pedida</text>
<text x="356.6" y="155" font-size="9.9" fill="#222" stroke="#222" stroke-width="0.08" textLength="54.8" lengthAdjust="spacingAndGlyphs">Unid. Compra</text>
<text x="416.9" y="155" font-size="9.9" fill="#222" stroke="#222" stroke-width="0.08" textLength="55.1" lengthAdjust="spacingAndGlyphs">Preço Compra</text>
<text x="478.2" y="155" font-size="9.9" fill="#222" stroke="#222" stroke-width="0.08" textLength="66.6" lengthAdjust="spacingAndGlyphs">Dt. Recebimento</text>
<text x="551" y="155" font-size="9.9" fill="#222" stroke="#222" stroke-width="0.08" textLength="56.3" lengthAdjust="spacingAndGlyphs">Tipo Desconto</text>
<text x="613.8" y="155" font-size="9.9" fill="#222" stroke="#222" stroke-width="0.08" textLength="59.2" lengthAdjust="spacingAndGlyphs">Perc. Desconto</text>
<text x="678.4" y="155" font-size="9.9" fill="#222" stroke="#222" stroke-width="0.08" textLength="60.6" lengthAdjust="spacingAndGlyphs">Valor Desconto</text>
<text x="745.2" y="155" font-size="9.9" fill="#222" stroke="#222" stroke-width="0.08" textLength="76.8" lengthAdjust="spacingAndGlyphs">Cód. Nat. Operação</text>
<rect x="14.5" y="144.5" width="43.1" height="13.5" fill="none" stroke="#217346" stroke-width="1.6" />
<rect x="56" y="156.5" width="3.5" height="3.5" fill="#217346" stroke="#fff" stroke-width="0.6" />
<g transform="translate(18.8 195)" stroke="#3a2cff" stroke-width="0.95" stroke-linecap="round"><line x1="0" y1="-1.45" x2="0" y2="1.45"/><line x1="-1.26" y1="-0.72" x2="1.26" y2="0.72"/><line x1="-1.26" y1="0.72" x2="1.26" y2="-0.72"/><circle r="0.85" fill="#3a2cff" stroke="none"/></g>
<g transform="translate(24.2 195)" stroke="#3a2cff" stroke-width="0.95" stroke-linecap="round"><line x1="0" y1="-1.45" x2="0" y2="1.45"/><line x1="-1.26" y1="-0.72" x2="1.26" y2="0.72"/><line x1="-1.26" y1="0.72" x2="1.26" y2="-0.72"/><circle r="0.85" fill="#3a2cff" stroke="none"/></g>
<text x="30.1" y="200.6" font-size="9.5" fill="#3a2cff" font-weight="bold" textLength="233.3" lengthAdjust="spacingAndGlyphs">Dica para INCLUSÃO de itens no PEDIDO DE COMPRA</text>
<g transform="translate(268.8 195)" stroke="#3a2cff" stroke-width="0.95" stroke-linecap="round"><line x1="0" y1="-1.45" x2="0" y2="1.45"/><line x1="-1.26" y1="-0.72" x2="1.26" y2="0.72"/><line x1="-1.26" y1="0.72" x2="1.26" y2="-0.72"/><circle r="0.85" fill="#3a2cff" stroke="none"/></g>
<g transform="translate(274.5 195)" stroke="#3a2cff" stroke-width="0.95" stroke-linecap="round"><line x1="0" y1="-1.45" x2="0" y2="1.45"/><line x1="-1.26" y1="-0.72" x2="1.26" y2="0.72"/><line x1="-1.26" y1="0.72" x2="1.26" y2="-0.72"/><circle r="0.85" fill="#3a2cff" stroke="none"/></g>
<g transform="translate(18.8 208.3)" stroke="#3a2cff" stroke-width="0.95" stroke-linecap="round"><line x1="0" y1="-1.45" x2="0" y2="1.45"/><line x1="-1.26" y1="-0.72" x2="1.26" y2="0.72"/><line x1="-1.26" y1="0.72" x2="1.26" y2="-0.72"/><circle r="0.85" fill="#3a2cff" stroke="none"/></g>
<g transform="translate(24.01 208.3)" stroke="#3a2cff" stroke-width="0.95" stroke-linecap="round"><line x1="0" y1="-1.45" x2="0" y2="1.45"/><line x1="-1.26" y1="-0.72" x2="1.26" y2="0.72"/><line x1="-1.26" y1="0.72" x2="1.26" y2="-0.72"/><circle r="0.85" fill="#3a2cff" stroke="none"/></g>
<g transform="translate(29.22 208.3)" stroke="#3a2cff" stroke-width="0.95" stroke-linecap="round"><line x1="0" y1="-1.45" x2="0" y2="1.45"/><line x1="-1.26" y1="-0.72" x2="1.26" y2="0.72"/><line x1="-1.26" y1="0.72" x2="1.26" y2="-0.72"/><circle r="0.85" fill="#3a2cff" stroke="none"/></g>
<g transform="translate(34.43 208.3)" stroke="#3a2cff" stroke-width="0.95" stroke-linecap="round"><line x1="0" y1="-1.45" x2="0" y2="1.45"/><line x1="-1.26" y1="-0.72" x2="1.26" y2="0.72"/><line x1="-1.26" y1="0.72" x2="1.26" y2="-0.72"/><circle r="0.85" fill="#3a2cff" stroke="none"/></g>
<g transform="translate(39.65 208.3)" stroke="#3a2cff" stroke-width="0.95" stroke-linecap="round"><line x1="0" y1="-1.45" x2="0" y2="1.45"/><line x1="-1.26" y1="-0.72" x2="1.26" y2="0.72"/><line x1="-1.26" y1="0.72" x2="1.26" y2="-0.72"/><circle r="0.85" fill="#3a2cff" stroke="none"/></g>
<g transform="translate(44.86 208.3)" stroke="#3a2cff" stroke-width="0.95" stroke-linecap="round"><line x1="0" y1="-1.45" x2="0" y2="1.45"/><line x1="-1.26" y1="-0.72" x2="1.26" y2="0.72"/><line x1="-1.26" y1="0.72" x2="1.26" y2="-0.72"/><circle r="0.85" fill="#3a2cff" stroke="none"/></g>
<g transform="translate(50.07 208.3)" stroke="#3a2cff" stroke-width="0.95" stroke-linecap="round"><line x1="0" y1="-1.45" x2="0" y2="1.45"/><line x1="-1.26" y1="-0.72" x2="1.26" y2="0.72"/><line x1="-1.26" y1="0.72" x2="1.26" y2="-0.72"/><circle r="0.85" fill="#3a2cff" stroke="none"/></g>
<g transform="translate(55.28 208.3)" stroke="#3a2cff" stroke-width="0.95" stroke-linecap="round"><line x1="0" y1="-1.45" x2="0" y2="1.45"/><line x1="-1.26" y1="-0.72" x2="1.26" y2="0.72"/><line x1="-1.26" y1="0.72" x2="1.26" y2="-0.72"/><circle r="0.85" fill="#3a2cff" stroke="none"/></g>
<g transform="translate(60.49 208.3)" stroke="#3a2cff" stroke-width="0.95" stroke-linecap="round"><line x1="0" y1="-1.45" x2="0" y2="1.45"/><line x1="-1.26" y1="-0.72" x2="1.26" y2="0.72"/><line x1="-1.26" y1="0.72" x2="1.26" y2="-0.72"/><circle r="0.85" fill="#3a2cff" stroke="none"/></g>
<g transform="translate(65.7 208.3)" stroke="#3a2cff" stroke-width="0.95" stroke-linecap="round"><line x1="0" y1="-1.45" x2="0" y2="1.45"/><line x1="-1.26" y1="-0.72" x2="1.26" y2="0.72"/><line x1="-1.26" y1="0.72" x2="1.26" y2="-0.72"/><circle r="0.85" fill="#3a2cff" stroke="none"/></g>
<g transform="translate(70.92 208.3)" stroke="#3a2cff" stroke-width="0.95" stroke-linecap="round"><line x1="0" y1="-1.45" x2="0" y2="1.45"/><line x1="-1.26" y1="-0.72" x2="1.26" y2="0.72"/><line x1="-1.26" y1="0.72" x2="1.26" y2="-0.72"/><circle r="0.85" fill="#3a2cff" stroke="none"/></g>
<g transform="translate(76.13 208.3)" stroke="#3a2cff" stroke-width="0.95" stroke-linecap="round"><line x1="0" y1="-1.45" x2="0" y2="1.45"/><line x1="-1.26" y1="-0.72" x2="1.26" y2="0.72"/><line x1="-1.26" y1="0.72" x2="1.26" y2="-0.72"/><circle r="0.85" fill="#3a2cff" stroke="none"/></g>
<g transform="translate(81.34 208.3)" stroke="#3a2cff" stroke-width="0.95" stroke-linecap="round"><line x1="0" y1="-1.45" x2="0" y2="1.45"/><line x1="-1.26" y1="-0.72" x2="1.26" y2="0.72"/><line x1="-1.26" y1="0.72" x2="1.26" y2="-0.72"/><circle r="0.85" fill="#3a2cff" stroke="none"/></g>
<g transform="translate(86.55 208.3)" stroke="#3a2cff" stroke-width="0.95" stroke-linecap="round"><line x1="0" y1="-1.45" x2="0" y2="1.45"/><line x1="-1.26" y1="-0.72" x2="1.26" y2="0.72"/><line x1="-1.26" y1="0.72" x2="1.26" y2="-0.72"/><circle r="0.85" fill="#3a2cff" stroke="none"/></g>
<g transform="translate(91.76 208.3)" stroke="#3a2cff" stroke-width="0.95" stroke-linecap="round"><line x1="0" y1="-1.45" x2="0" y2="1.45"/><line x1="-1.26" y1="-0.72" x2="1.26" y2="0.72"/><line x1="-1.26" y1="0.72" x2="1.26" y2="-0.72"/><circle r="0.85" fill="#3a2cff" stroke="none"/></g>
<g transform="translate(96.97 208.3)" stroke="#3a2cff" stroke-width="0.95" stroke-linecap="round"><line x1="0" y1="-1.45" x2="0" y2="1.45"/><line x1="-1.26" y1="-0.72" x2="1.26" y2="0.72"/><line x1="-1.26" y1="0.72" x2="1.26" y2="-0.72"/><circle r="0.85" fill="#3a2cff" stroke="none"/></g>
<g transform="translate(102.18 208.3)" stroke="#3a2cff" stroke-width="0.95" stroke-linecap="round"><line x1="0" y1="-1.45" x2="0" y2="1.45"/><line x1="-1.26" y1="-0.72" x2="1.26" y2="0.72"/><line x1="-1.26" y1="0.72" x2="1.26" y2="-0.72"/><circle r="0.85" fill="#3a2cff" stroke="none"/></g>
<g transform="translate(107.4 208.3)" stroke="#3a2cff" stroke-width="0.95" stroke-linecap="round"><line x1="0" y1="-1.45" x2="0" y2="1.45"/><line x1="-1.26" y1="-0.72" x2="1.26" y2="0.72"/><line x1="-1.26" y1="0.72" x2="1.26" y2="-0.72"/><circle r="0.85" fill="#3a2cff" stroke="none"/></g>
<g transform="translate(112.61 208.3)" stroke="#3a2cff" stroke-width="0.95" stroke-linecap="round"><line x1="0" y1="-1.45" x2="0" y2="1.45"/><line x1="-1.26" y1="-0.72" x2="1.26" y2="0.72"/><line x1="-1.26" y1="0.72" x2="1.26" y2="-0.72"/><circle r="0.85" fill="#3a2cff" stroke="none"/></g>
<g transform="translate(117.82 208.3)" stroke="#3a2cff" stroke-width="0.95" stroke-linecap="round"><line x1="0" y1="-1.45" x2="0" y2="1.45"/><line x1="-1.26" y1="-0.72" x2="1.26" y2="0.72"/><line x1="-1.26" y1="0.72" x2="1.26" y2="-0.72"/><circle r="0.85" fill="#3a2cff" stroke="none"/></g>
<g transform="translate(123.03 208.3)" stroke="#3a2cff" stroke-width="0.95" stroke-linecap="round"><line x1="0" y1="-1.45" x2="0" y2="1.45"/><line x1="-1.26" y1="-0.72" x2="1.26" y2="0.72"/><line x1="-1.26" y1="0.72" x2="1.26" y2="-0.72"/><circle r="0.85" fill="#3a2cff" stroke="none"/></g>
<g transform="translate(128.24 208.3)" stroke="#3a2cff" stroke-width="0.95" stroke-linecap="round"><line x1="0" y1="-1.45" x2="0" y2="1.45"/><line x1="-1.26" y1="-0.72" x2="1.26" y2="0.72"/><line x1="-1.26" y1="0.72" x2="1.26" y2="-0.72"/><circle r="0.85" fill="#3a2cff" stroke="none"/></g>
<g transform="translate(133.45 208.3)" stroke="#3a2cff" stroke-width="0.95" stroke-linecap="round"><line x1="0" y1="-1.45" x2="0" y2="1.45"/><line x1="-1.26" y1="-0.72" x2="1.26" y2="0.72"/><line x1="-1.26" y1="0.72" x2="1.26" y2="-0.72"/><circle r="0.85" fill="#3a2cff" stroke="none"/></g>
<g transform="translate(138.67 208.3)" stroke="#3a2cff" stroke-width="0.95" stroke-linecap="round"><line x1="0" y1="-1.45" x2="0" y2="1.45"/><line x1="-1.26" y1="-0.72" x2="1.26" y2="0.72"/><line x1="-1.26" y1="0.72" x2="1.26" y2="-0.72"/><circle r="0.85" fill="#3a2cff" stroke="none"/></g>
<g transform="translate(143.88 208.3)" stroke="#3a2cff" stroke-width="0.95" stroke-linecap="round"><line x1="0" y1="-1.45" x2="0" y2="1.45"/><line x1="-1.26" y1="-0.72" x2="1.26" y2="0.72"/><line x1="-1.26" y1="0.72" x2="1.26" y2="-0.72"/><circle r="0.85" fill="#3a2cff" stroke="none"/></g>
<g transform="translate(149.09 208.3)" stroke="#3a2cff" stroke-width="0.95" stroke-linecap="round"><line x1="0" y1="-1.45" x2="0" y2="1.45"/><line x1="-1.26" y1="-0.72" x2="1.26" y2="0.72"/><line x1="-1.26" y1="0.72" x2="1.26" y2="-0.72"/><circle r="0.85" fill="#3a2cff" stroke="none"/></g>
<g transform="translate(154.3 208.3)" stroke="#3a2cff" stroke-width="0.95" stroke-linecap="round"><line x1="0" y1="-1.45" x2="0" y2="1.45"/><line x1="-1.26" y1="-0.72" x2="1.26" y2="0.72"/><line x1="-1.26" y1="0.72" x2="1.26" y2="-0.72"/><circle r="0.85" fill="#3a2cff" stroke="none"/></g>
<g transform="translate(159.51 208.3)" stroke="#3a2cff" stroke-width="0.95" stroke-linecap="round"><line x1="0" y1="-1.45" x2="0" y2="1.45"/><line x1="-1.26" y1="-0.72" x2="1.26" y2="0.72"/><line x1="-1.26" y1="0.72" x2="1.26" y2="-0.72"/><circle r="0.85" fill="#3a2cff" stroke="none"/></g>
<g transform="translate(164.72 208.3)" stroke="#3a2cff" stroke-width="0.95" stroke-linecap="round"><line x1="0" y1="-1.45" x2="0" y2="1.45"/><line x1="-1.26" y1="-0.72" x2="1.26" y2="0.72"/><line x1="-1.26" y1="0.72" x2="1.26" y2="-0.72"/><circle r="0.85" fill="#3a2cff" stroke="none"/></g>
<g transform="translate(169.93 208.3)" stroke="#3a2cff" stroke-width="0.95" stroke-linecap="round"><line x1="0" y1="-1.45" x2="0" y2="1.45"/><line x1="-1.26" y1="-0.72" x2="1.26" y2="0.72"/><line x1="-1.26" y1="0.72" x2="1.26" y2="-0.72"/><circle r="0.85" fill="#3a2cff" stroke="none"/></g>
<g transform="translate(175.15 208.3)" stroke="#3a2cff" stroke-width="0.95" stroke-linecap="round"><line x1="0" y1="-1.45" x2="0" y2="1.45"/><line x1="-1.26" y1="-0.72" x2="1.26" y2="0.72"/><line x1="-1.26" y1="0.72" x2="1.26" y2="-0.72"/><circle r="0.85" fill="#3a2cff" stroke="none"/></g>
<g transform="translate(180.36 208.3)" stroke="#3a2cff" stroke-width="0.95" stroke-linecap="round"><line x1="0" y1="-1.45" x2="0" y2="1.45"/><line x1="-1.26" y1="-0.72" x2="1.26" y2="0.72"/><line x1="-1.26" y1="0.72" x2="1.26" y2="-0.72"/><circle r="0.85" fill="#3a2cff" stroke="none"/></g>
<g transform="translate(185.57 208.3)" stroke="#3a2cff" stroke-width="0.95" stroke-linecap="round"><line x1="0" y1="-1.45" x2="0" y2="1.45"/><line x1="-1.26" y1="-0.72" x2="1.26" y2="0.72"/><line x1="-1.26" y1="0.72" x2="1.26" y2="-0.72"/><circle r="0.85" fill="#3a2cff" stroke="none"/></g>
<g transform="translate(190.78 208.3)" stroke="#3a2cff" stroke-width="0.95" stroke-linecap="round"><line x1="0" y1="-1.45" x2="0" y2="1.45"/><line x1="-1.26" y1="-0.72" x2="1.26" y2="0.72"/><line x1="-1.26" y1="0.72" x2="1.26" y2="-0.72"/><circle r="0.85" fill="#3a2cff" stroke="none"/></g>
<g transform="translate(195.99 208.3)" stroke="#3a2cff" stroke-width="0.95" stroke-linecap="round"><line x1="0" y1="-1.45" x2="0" y2="1.45"/><line x1="-1.26" y1="-0.72" x2="1.26" y2="0.72"/><line x1="-1.26" y1="0.72" x2="1.26" y2="-0.72"/><circle r="0.85" fill="#3a2cff" stroke="none"/></g>
<g transform="translate(201.2 208.3)" stroke="#3a2cff" stroke-width="0.95" stroke-linecap="round"><line x1="0" y1="-1.45" x2="0" y2="1.45"/><line x1="-1.26" y1="-0.72" x2="1.26" y2="0.72"/><line x1="-1.26" y1="0.72" x2="1.26" y2="-0.72"/><circle r="0.85" fill="#3a2cff" stroke="none"/></g>
<g transform="translate(206.42 208.3)" stroke="#3a2cff" stroke-width="0.95" stroke-linecap="round"><line x1="0" y1="-1.45" x2="0" y2="1.45"/><line x1="-1.26" y1="-0.72" x2="1.26" y2="0.72"/><line x1="-1.26" y1="0.72" x2="1.26" y2="-0.72"/><circle r="0.85" fill="#3a2cff" stroke="none"/></g>
<g transform="translate(211.63 208.3)" stroke="#3a2cff" stroke-width="0.95" stroke-linecap="round"><line x1="0" y1="-1.45" x2="0" y2="1.45"/><line x1="-1.26" y1="-0.72" x2="1.26" y2="0.72"/><line x1="-1.26" y1="0.72" x2="1.26" y2="-0.72"/><circle r="0.85" fill="#3a2cff" stroke="none"/></g>
<g transform="translate(216.84 208.3)" stroke="#3a2cff" stroke-width="0.95" stroke-linecap="round"><line x1="0" y1="-1.45" x2="0" y2="1.45"/><line x1="-1.26" y1="-0.72" x2="1.26" y2="0.72"/><line x1="-1.26" y1="0.72" x2="1.26" y2="-0.72"/><circle r="0.85" fill="#3a2cff" stroke="none"/></g>
<g transform="translate(222.05 208.3)" stroke="#3a2cff" stroke-width="0.95" stroke-linecap="round"><line x1="0" y1="-1.45" x2="0" y2="1.45"/><line x1="-1.26" y1="-0.72" x2="1.26" y2="0.72"/><line x1="-1.26" y1="0.72" x2="1.26" y2="-0.72"/><circle r="0.85" fill="#3a2cff" stroke="none"/></g>
<g transform="translate(227.26 208.3)" stroke="#3a2cff" stroke-width="0.95" stroke-linecap="round"><line x1="0" y1="-1.45" x2="0" y2="1.45"/><line x1="-1.26" y1="-0.72" x2="1.26" y2="0.72"/><line x1="-1.26" y1="0.72" x2="1.26" y2="-0.72"/><circle r="0.85" fill="#3a2cff" stroke="none"/></g>
<g transform="translate(232.47 208.3)" stroke="#3a2cff" stroke-width="0.95" stroke-linecap="round"><line x1="0" y1="-1.45" x2="0" y2="1.45"/><line x1="-1.26" y1="-0.72" x2="1.26" y2="0.72"/><line x1="-1.26" y1="0.72" x2="1.26" y2="-0.72"/><circle r="0.85" fill="#3a2cff" stroke="none"/></g>
<g transform="translate(237.68 208.3)" stroke="#3a2cff" stroke-width="0.95" stroke-linecap="round"><line x1="0" y1="-1.45" x2="0" y2="1.45"/><line x1="-1.26" y1="-0.72" x2="1.26" y2="0.72"/><line x1="-1.26" y1="0.72" x2="1.26" y2="-0.72"/><circle r="0.85" fill="#3a2cff" stroke="none"/></g>
<g transform="translate(242.9 208.3)" stroke="#3a2cff" stroke-width="0.95" stroke-linecap="round"><line x1="0" y1="-1.45" x2="0" y2="1.45"/><line x1="-1.26" y1="-0.72" x2="1.26" y2="0.72"/><line x1="-1.26" y1="0.72" x2="1.26" y2="-0.72"/><circle r="0.85" fill="#3a2cff" stroke="none"/></g>
<g transform="translate(248.11 208.3)" stroke="#3a2cff" stroke-width="0.95" stroke-linecap="round"><line x1="0" y1="-1.45" x2="0" y2="1.45"/><line x1="-1.26" y1="-0.72" x2="1.26" y2="0.72"/><line x1="-1.26" y1="0.72" x2="1.26" y2="-0.72"/><circle r="0.85" fill="#3a2cff" stroke="none"/></g>
<g transform="translate(253.32 208.3)" stroke="#3a2cff" stroke-width="0.95" stroke-linecap="round"><line x1="0" y1="-1.45" x2="0" y2="1.45"/><line x1="-1.26" y1="-0.72" x2="1.26" y2="0.72"/><line x1="-1.26" y1="0.72" x2="1.26" y2="-0.72"/><circle r="0.85" fill="#3a2cff" stroke="none"/></g>
<g transform="translate(258.53 208.3)" stroke="#3a2cff" stroke-width="0.95" stroke-linecap="round"><line x1="0" y1="-1.45" x2="0" y2="1.45"/><line x1="-1.26" y1="-0.72" x2="1.26" y2="0.72"/><line x1="-1.26" y1="0.72" x2="1.26" y2="-0.72"/><circle r="0.85" fill="#3a2cff" stroke="none"/></g>
<g transform="translate(263.74 208.3)" stroke="#3a2cff" stroke-width="0.95" stroke-linecap="round"><line x1="0" y1="-1.45" x2="0" y2="1.45"/><line x1="-1.26" y1="-0.72" x2="1.26" y2="0.72"/><line x1="-1.26" y1="0.72" x2="1.26" y2="-0.72"/><circle r="0.85" fill="#3a2cff" stroke="none"/></g>
<g transform="translate(268.95 208.3)" stroke="#3a2cff" stroke-width="0.95" stroke-linecap="round"><line x1="0" y1="-1.45" x2="0" y2="1.45"/><line x1="-1.26" y1="-0.72" x2="1.26" y2="0.72"/><line x1="-1.26" y1="0.72" x2="1.26" y2="-0.72"/><circle r="0.85" fill="#3a2cff" stroke="none"/></g>
<g transform="translate(274.17 208.3)" stroke="#3a2cff" stroke-width="0.95" stroke-linecap="round"><line x1="0" y1="-1.45" x2="0" y2="1.45"/><line x1="-1.26" y1="-0.72" x2="1.26" y2="0.72"/><line x1="-1.26" y1="0.72" x2="1.26" y2="-0.72"/><circle r="0.85" fill="#3a2cff" stroke="none"/></g>
<g transform="translate(279.38 208.3)" stroke="#3a2cff" stroke-width="0.95" stroke-linecap="round"><line x1="0" y1="-1.45" x2="0" y2="1.45"/><line x1="-1.26" y1="-0.72" x2="1.26" y2="0.72"/><line x1="-1.26" y1="0.72" x2="1.26" y2="-0.72"/><circle r="0.85" fill="#3a2cff" stroke="none"/></g>
<g transform="translate(284.59 208.3)" stroke="#3a2cff" stroke-width="0.95" stroke-linecap="round"><line x1="0" y1="-1.45" x2="0" y2="1.45"/><line x1="-1.26" y1="-0.72" x2="1.26" y2="0.72"/><line x1="-1.26" y1="0.72" x2="1.26" y2="-0.72"/><circle r="0.85" fill="#3a2cff" stroke="none"/></g>
<g transform="translate(289.8 208.3)" stroke="#3a2cff" stroke-width="0.95" stroke-linecap="round"><line x1="0" y1="-1.45" x2="0" y2="1.45"/><line x1="-1.26" y1="-0.72" x2="1.26" y2="0.72"/><line x1="-1.26" y1="0.72" x2="1.26" y2="-0.72"/><circle r="0.85" fill="#3a2cff" stroke="none"/></g>
<text x="16.7" y="227.8" font-size="9.5" fill="#3a2cff" font-weight="bold" textLength="174.6" lengthAdjust="spacingAndGlyphs">Ajuda para Preenchimento dos Campos</text>
<text x="22" y="241.4" font-size="9.5" fill="#3a2cff" font-weight="bold" textLength="326.7" lengthAdjust="spacingAndGlyphs">Seq. Item: Campo NÃO Obrigatório, somente para Controle de Sequencia.</text>
<text x="22" y="255.0" font-size="9.5" fill="#3a2cff" font-weight="bold" textLength="299.9" lengthAdjust="spacingAndGlyphs">Código Item (Reduzido): Código Reduzido do Item no Sistema MBM.</text>
<text x="22" y="268.6" font-size="9.5" fill="#3a2cff" font-weight="bold" textLength="269" lengthAdjust="spacingAndGlyphs">Código Item: Código de Referência do Item no Sistema MBM.</text>
<text x="22.2" y="282.2" font-size="9.5" fill="#3a2cff" font-weight="bold" textLength="599.4" lengthAdjust="spacingAndGlyphs">ATENÇÃO: É OBRIGATÓRIO o preenchimento de um dos Campos "Código Item (Reduzido)" OU "Código Item" para Identificação do Item.</text>
<text x="27" y="295.8" font-size="9.5" fill="#3a2cff" font-weight="bold" textLength="419" lengthAdjust="spacingAndGlyphs">Caso seja informado os 2 campos, o item será localizado pelo campo "Código Item (Reduzido)".</text>
<text x="22.2" y="309.4" font-size="9.5" fill="#3a2cff" font-weight="bold" textLength="547.1" lengthAdjust="spacingAndGlyphs">Descrição Item: Campo NÃO OBRIGATÓRIO. Porém se preenchido será levado a mesma para a descrição do item da compra.</text>
<text x="22.2" y="323.0" font-size="9.5" fill="#3a2cff" font-weight="bold" textLength="654.8" lengthAdjust="spacingAndGlyphs">Qtde. Pedida: Campo OBRIGATÓRIO. Identifica a Quantidade de Itens na Unidade a serem incluidos no Pedido de Compra. Formato a seguir: 1234,56</text>
<text x="22.2" y="336.6" font-size="9.5" fill="#3a2cff" font-weight="bold" textLength="500.2" lengthAdjust="spacingAndGlyphs">Unid. Compra: Campo NÃO OBRIGATÓRIO. Caso não seja informado será utilizado a unidade do cadastro do Item.</text>
<text x="22.2" y="350.2" font-size="9.5" fill="#3a2cff" font-weight="bold" textLength="486.7" lengthAdjust="spacingAndGlyphs">Preço Compra: Campo NÃO OBRIGATÓRIO caso o parâmetro 372 esteja com um valor diferente de "Nenhum".</text>
<text x="27" y="363.8" font-size="9.5" fill="#3a2cff" font-weight="bold" textLength="709.7" lengthAdjust="spacingAndGlyphs">Se caso for algum valor diferente de nenhum, será realizado a lógica para encontrar o Preço conforme o parâmetro, caso não for informado valor neste campo.</text>
<text x="27" y="377.4" font-size="9.5" fill="#3a2cff" font-weight="bold" textLength="116" lengthAdjust="spacingAndGlyphs">Formato a seguir: 1234,56.</text>
<text x="22" y="391.0" font-size="9.5" fill="#3a2cff" font-weight="bold" textLength="543.4" lengthAdjust="spacingAndGlyphs">Dt. Recebimento: Campo NÃO OBRIGATÓRIO. Determina a Data de Recebimento do Item. Formato a seguir: DD/MM/AAAA</text>
<text x="22" y="404.6" font-size="9.5" fill="#3a2cff" font-weight="bold" textLength="641" lengthAdjust="spacingAndGlyphs">Tipo Desconto: Campo NÃO OBRIGATÓRIO. Determina qual será a Regra de Cálculo do Desconto, se será calculado pelo Percentual ou pelo Valor.</text>
<text x="27" y="418.2" font-size="9.5" fill="#3a2cff" font-weight="bold" textLength="601" lengthAdjust="spacingAndGlyphs">Caso não informado será entendido que não haverá nenhum tipo de desconto e os demais campos de desconto serão desconsiderados.</text>
<text x="32.2" y="431.8" font-size="9.5" fill="#3a2cff" font-weight="bold" textLength="256.3" lengthAdjust="spacingAndGlyphs">Opções de Preenchimento: "P" - Percentual ou "V" - Valor</text>
<rect x="873.7" y="132" width="12.3" height="304.5" fill="#e8e8e8" />
<rect x="875.3" y="133.6" width="9.8" height="9.8" fill="#fff" stroke="#bcbcbc" stroke-width="0.7" />
<path d="M878.2 140.3 L880.2 137.3 L882.2 140.3 Z" fill="#333" />
<rect x="875.3" y="144.3" width="9.8" height="225" fill="#fff" stroke="#c6c6c6" stroke-width="0.7" />
<rect x="875.3" y="427.2" width="9.8" height="8.8" fill="#fff" stroke="#bcbcbc" stroke-width="0.7" />
<path d="M878.2 430.3 L882.2 430.3 L880.2 433.3 Z" fill="#333" />
<rect x="0" y="436.3" width="886" height="17.7" fill="#e6e6e6" />
<line x1="0" y1="436.8" x2="886" y2="436.8" stroke="#c6c6c6" stroke-width="1" />
<path d="M18.3 443 L15.8 445.3 L18.3 447.6 Z" fill="#c4c4c4" />
<path d="M34.2 443 L36.7 445.3 L34.2 447.6 Z" fill="#c4c4c4" />
<rect x="63.2" y="436.5" width="52.4" height="16" fill="#fff" />
<line x1="115.6" y1="437" x2="115.6" y2="452.5" stroke="#c6c6c6" stroke-width="0.8" />
<rect x="63.2" y="451" width="52.4" height="2" fill="#217346" />
<text x="89.4" y="448.2" font-size="9" fill="#217346" font-weight="bold" textLength="36" lengthAdjust="spacingAndGlyphs" text-anchor="middle">Planilha1</text>
<circle cx="142.3" cy="445.2" r="5" fill="none" stroke="#777" stroke-width="0.8"/>
<path d="M139.3 445.2 H145.3 M142.3 442.2 V448.2" fill="none" stroke="#777" stroke-width="0.8" />
<circle cx="531.6" cy="441.5" r="0.5" fill="#999"/>
<circle cx="531.6" cy="445" r="0.5" fill="#999"/>
<circle cx="531.6" cy="448.5" r="0.5" fill="#999"/>
<rect x="542.3" y="441.7" width="297.3" height="9.1" fill="#fff" stroke="#bcbcbc" stroke-width="0.7" />
<rect x="542.3" y="441.7" width="9.2" height="9.1" fill="#fff" stroke="#bcbcbc" stroke-width="0.7" />
<path d="M548.5 444.2 L545.5 446.25 L548.5 448.3 Z" fill="#333" />
<rect x="863.8" y="441.4" width="9.4" height="9.2" fill="#fff" stroke="#bcbcbc" stroke-width="0.7" />
<path d="M867.3 443.9 L870.3 445.95 L867.3 448 Z" fill="#333" />
<rect x="0" y="454" width="886" height="15" fill="#f3f3f3" />
<line x1="0" y1="454.2" x2="886" y2="454.2" stroke="#d6d6d6" stroke-width="0.8" />
<text x="5.6" y="464.4" font-size="8.5" fill="#333" stroke="#333" stroke-width="0.1" textLength="22.1" lengthAdjust="spacingAndGlyphs">Pronto</text>
<circle cx="42.9" cy="458.7" r="1.4" fill="#555"/>
<rect x="45.3" y="457.6" width="4.4" height="1.9" fill="#555" />
<rect x="41.2" y="460.6" width="2.5" height="5.2" fill="#9a9a9a" />
<rect x="44.2" y="460.6" width="2.3" height="5.2" fill="#9a9a9a" />
<rect x="47.1" y="460.6" width="2.6" height="5.2" fill="#9a9a9a" />
<rect x="41.2" y="460.6" width="8.5" height="1.2" fill="#666" />
<path d="M63.5 458.5 A4.2 4.2 0 0 0 63.5 465.5" fill="none" stroke="#555" stroke-width="0.9" />
<path d="M65.8 456.8 V461.5 M64 459.8 L65.8 461.6 L67.6 459.8" fill="none" stroke="#555" stroke-width="0.9" />
<path d="M66.5 464 L68 465.8 L71.2 461.8" fill="none" stroke="#555" stroke-width="0.9" />
<text x="73.1" y="464.7" font-size="8.5" fill="#333" textLength="86.7" lengthAdjust="spacingAndGlyphs">Acessibilidade: tudo certo</text>
<rect x="598.8" y="456" width="9" height="6.5" fill="#555" />
<circle cx="606.5" cy="463.5" r="2.3" fill="#555" stroke="#f3f3f3" stroke-width="0.6"/>
<text x="610.4" y="464.7" font-size="8.5" fill="#333" textLength="69.1" lengthAdjust="spacingAndGlyphs">Exibir Configurações</text>
<rect x="692.3" y="455.4" width="25.5" height="13.6" fill="#d3d3d3" />
<rect x="700.5" y="457.5" width="9" height="9" fill="none" stroke="#888" stroke-width="0.7" />
<line x1="700.5" y1="460.5" x2="709.5" y2="460.5" stroke="#888" stroke-width="0.6" />
<line x1="700.5" y1="463.5" x2="709.5" y2="463.5" stroke="#888" stroke-width="0.6" />
<line x1="703.5" y1="457.5" x2="703.5" y2="466.5" stroke="#888" stroke-width="0.6" />
<line x1="706.5" y1="457.5" x2="706.5" y2="466.5" stroke="#888" stroke-width="0.6" />
<rect x="726.2" y="457.8" width="9.3" height="8.5" fill="none" stroke="#888" stroke-width="0.7" />
<rect x="728.2" y="459.3" width="5.3" height="5.5" fill="none" stroke="#888" stroke-width="0.6" />
<rect x="752.2" y="457.8" width="9" height="8.5" fill="none" stroke="#888" stroke-width="0.7" />
<path d="M754.5 457.8 V461.5 H758.5 V457.8" fill="none" stroke="#888" stroke-width="0.6" />
<line x1="774" y1="462" x2="778.7" y2="462" stroke="#555" stroke-width="0.8" />
<line x1="783" y1="462" x2="848" y2="462" stroke="#888" stroke-width="0.8" />
<rect x="813.4" y="458.6" width="3.6" height="6.9" fill="#444" />
<path d="M850.7 462 H855.8 M853.25 459.5 V464.5" fill="none" stroke="#555" stroke-width="0.8" />
<text x="864.8" y="464.7" font-size="8.5" fill="#333" textLength="16.8" lengthAdjust="spacingAndGlyphs">100%</text>
</svg>
</body></html>
